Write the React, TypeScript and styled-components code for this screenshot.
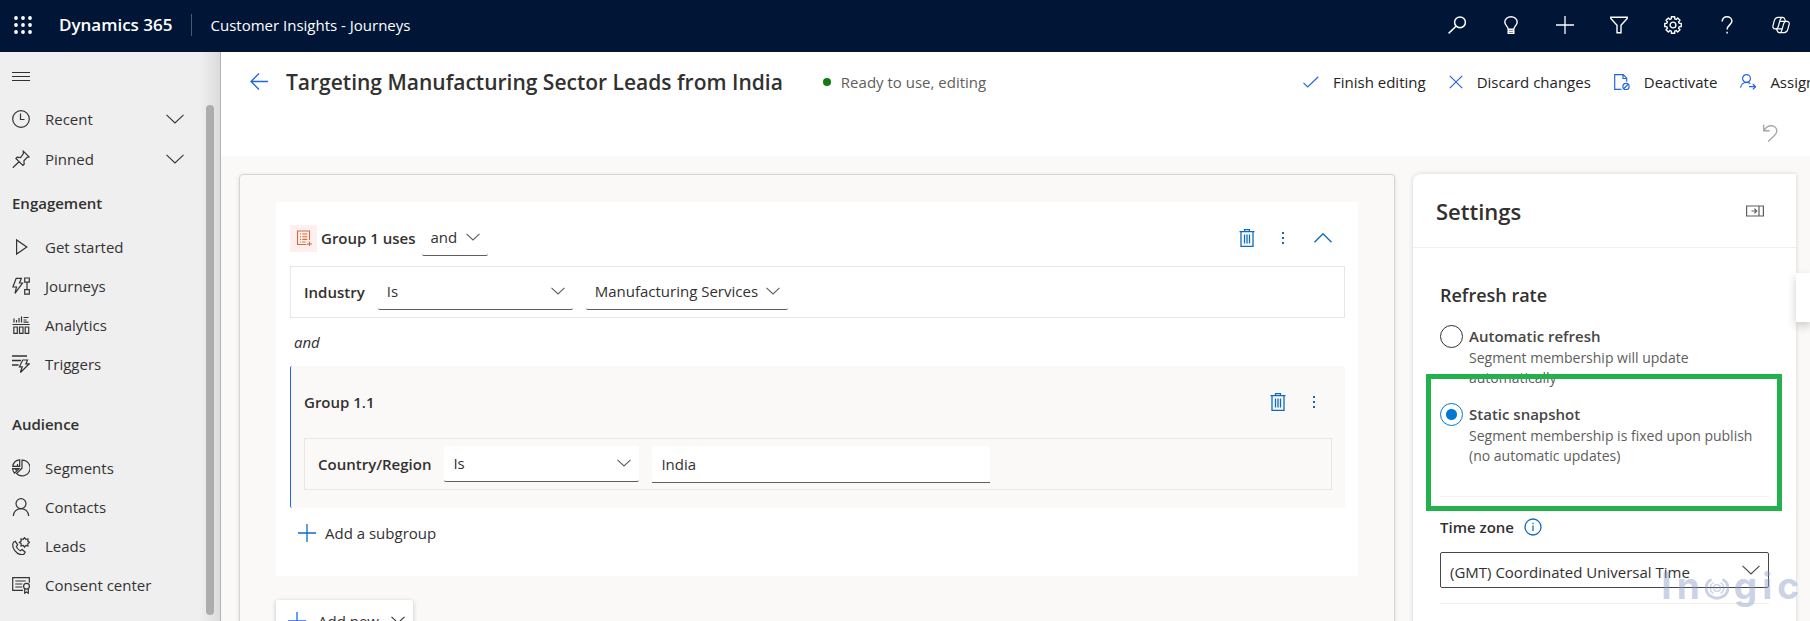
import React from "react";
import styled, { createGlobalStyle } from "styled-components";

const GlobalStyle = createGlobalStyle`
  *, *::before, *::after { box-sizing: border-box; }
  body { margin: 0; background: #ffffff; }
  body, button, input, select {
    font-family: "Open Sans", "Noto Sans", "Liberation Sans", sans-serif;
    font-size: 15px;
    color: #323130;
  }
  h1, h2, h3, p, ul { margin: 0; padding: 0; }
  ul { list-style: none; }
`;

/* ---------- icons ---------- */

type GlyphProps = { size?: number; w?: number; stroke?: number; children: React.ReactNode };

const Svg = styled.svg`
  display: block;
  flex: none;
  fill: none;
  stroke: currentColor;
`;

const Glyph = ({ size = 18, w, stroke = 1.2, children }: GlyphProps) => (
  <Svg
    width={w ?? size}
    height={size}
    viewBox={`0 0 ${w ?? size} ${size}`}
    strokeWidth={stroke}
    aria-hidden="true"
  >
    {children}
  </Svg>
);

const Waffle = () => (
  <Glyph>
    {[2, 9, 16].map((y) =>
      [2, 9, 16].map((x) => (
        <circle key={`${x}-${y}`} cx={x} cy={y} r="1.9" fill="currentColor" stroke="none" />
      ))
    )}
  </Glyph>
);
const SearchIcon = () => (
  <Glyph stroke={1.5}>
    <circle cx="12" cy="6.3" r="5.4" />
    <path d="M8 10.2 0.6 17.4" />
  </Glyph>
);
const BulbIcon = () => (
  <Glyph stroke={1.4}>
    <path d="M6.2 13.2c0-2.6-3.4-3.700-3.400-7.200a6.200 5.300 0 0 1 12.400 0c0 3.500-3.400 4.600-3.400 7.200zM6.200 13.200v4.100h5.600v-4.100M6.200 15.200h5.600" />
  </Glyph>
);
const PlusIcon = ({ size = 18 }: { size?: number }) => (
  <Glyph size={size} stroke={1.3}>
    <path d={`M${size / 2} 0v${size}M0 ${size / 2}h${size}`} />
  </Glyph>
);
const FilterIcon = () => (
  <Glyph stroke={1.4}>
    <path d="M0.800 1.200h16.400v1.200L11 9.200v7.600H7V9.200L0.800 2.400z" />
  </Glyph>
);
const gearPath = (() => {
  const pts: string[] = [];
  for (let i = 0; i < 8; i++) {
    const a = (i * Math.PI) / 4;
    [
      [-0.27, 6.4],
      [-0.2, 8.4],
      [0.2, 8.4],
      [0.27, 6.4],
    ].forEach(([d, r]) => {
      pts.push(`${(9 + Math.cos(a + d) * r).toFixed(2)} ${(9 + Math.sin(a + d) * r).toFixed(2)}`);
    });
  }
  return `M${pts.join("L")}Z`;
})();
const GearIcon = () => (
  <Glyph stroke={1.4}>
    <path d={gearPath} strokeLinejoin="round" />
    <circle cx="9" cy="9" r="2.9" />
  </Glyph>
);
const HelpIcon = () => (
  <Glyph stroke={1.5}>
    <path d="M4.200 5.400C4.200 2.500 6.300 0.800 9 0.800s4.900 1.700 4.900 4.300c0 3.500-4.800 4.200-4.800 8.400" />
    <path d="M9.100 15.800v1.800" />
  </Glyph>
);
const CopilotIcon = () => (
  <Glyph stroke={1.2}>
    <path d="M6.200 1.300h4.700c1.300 0 1.700 1 2.100 2.300l.5 1.700h1.400c1.900 0 2.700 1.500 2.200 3.200l-1.300 4.900c-.6 2.200-1.700 3.300-3.600 3.300H7.400c-1.400 0-1.900-.9-2.300-2.200l-.5-1.700H3.200c-1.900 0-2.700-1.500-2.200-3.200l1.300-4.900C2.900 2.400 4.200 1.300 6.200 1.300z" />
    <path d="M10.900 1.300c-1.500 0-2.300.8-2.700 2.300L6.300 10.500c-.4 1.500-1 2.300-2.400 2.300M7.400 16.700c1.500 0 2-.8 2.400-2.300l1.900-6.800c.4-1.500.9-2.300 2.300-2.300M7.700 5.300h6M4.300 12.800h5.900" />
  </Glyph>
);

const MenuIcon = () => (
  <Glyph>
    <path d="M0 4.500h18M0 8.500h18M0 12.500h18" />
  </Glyph>
);
const ClockIcon = () => (
  <Glyph>
    <circle cx="9" cy="9" r="8.3" />
    <path d="M8.500 3.500v6h4" />
  </Glyph>
);
const PinIcon = () => (
  <Glyph>
    <path d="M11.300 1.200 17 6.900l-1.800.4-3.300 3.500.3 3.400-1.300 1.300-7-7 1.300-1.300 3.400.3 2.800-3.900zM7.300 11.500.8 17.800" />
  </Glyph>
);
const PlayIcon = () => (
  <Glyph>
    <path d="M4.600 2v14L14.800 9z" />
  </Glyph>
);
const JourneyIcon = () => (
  <Glyph>
    <path d="M4.200 1.300h5.200L7.500 6h3L3 16.300 4.500 10H.9z" />
    <path d="M12.700 1h4.600v4.200h-4.600zM12.700 12.600h4.600v4.600h-4.600zM15 5.200v7.400" />
  </Glyph>
);
const AnalyticsIcon = () => (
  <Glyph>
    <path d="M2 2.500V6.500M4.500 4v2.500M7 2v4.500M9.500.5v6M11.500 1.500h5M11.500 4h3M11.500 6.200h5M.5 8.500h17.300M1.800 11h3.500v6.300H1.800zM7.500 11H11v6.300H7.500zM13.200 11h3.500v6.300h-3.500z" />
  </Glyph>
);
const TriggerIcon = () => (
  <Glyph>
    <path d="M0 1h15M0 5.500h9M0 10h6.500" strokeWidth="1.5" />
    <path d="M10.700 5h4.800l-1.600 3.800h3.400L8.400 17.500l1.800-5.700H7.400z" />
  </Glyph>
);
const SegmentIcon = () => (
  <Glyph>
    <path d="M10 1.100a7.900 7.900 0 1 1-5.400 13.500L10 9.200z" />
    <path d="M7.700.8v6.600H.8A7 7 0 0 1 7.700.8zM.6 9.700h6.500l-4.500 4.500C1.300 13 .7 11.500.6 9.700zM5.500 5v2M3 10l2 1.500" />
  </Glyph>
);
const PersonIcon = () => (
  <Glyph>
    <circle cx="9" cy="5.6" r="5" />
    <path d="M1.300 18c.2-4.300 3.400-7.400 7.700-7.400s7.500 3.100 7.700 7.400" />
  </Glyph>
);
const LeadIcon = () => (
  <Glyph>
    <path d="M1.500 5.200 3.300 4.300l2.400 3.500-1.400 1.800c.8 2 2.100 3.300 4 4.100l1.800-1.200 3.100 2.700-1.300 2c-3.500 1.200-6.700-.5-8.900-3.300C.9 11.200 0 8 1.500 5.200z" />
    <path d="m12.500.6 1.300 1.800 2.200-.5-.2 2.200 1.800 1.300-1.800 1.300.2 2.200-2.200-.5-1.300 1.800-1.300-1.800-2.200.5.2-2.200-1.800-1.300 1.800-1.300L9 1.900l2.200.5z" />
  </Glyph>
);
const ConsentIcon = () => (
  <Glyph>
    <path d="M11 14.300H.7V1.700h16.600v5M3.300 5h10.400M3.300 8h7M3.300 11h7" />
    <circle cx="14.5" cy="10.2" r="2.9" />
    <path d="M12.700 12.500v4.700l1.800-1.200 1.800 1.200v-4.700" />
  </Glyph>
);

const BackIcon = () => (
  <Glyph stroke={1.3}>
    <path d="M18 8.500H1M9 .5 1 8.500l8 8" />
  </Glyph>
);
const CheckIcon = () => (
  <Glyph size={16} stroke={1.2}>
    <path d="m.5 8.800 4.200 4.200L15.300 2.800" />
  </Glyph>
);
const CrossIcon = () => (
  <Glyph size={14} stroke={1.2}>
    <path d="m.8.800 12.400 12.400M13.200.800.800 13.200" />
  </Glyph>
);
const DeactivateIcon = () => (
  <Glyph size={16}>
    <path d="M7.500 15.400H.7V.6h8.600l3.400 3.600v3.600M9 .8v3.700h3.500" />
    <circle cx="12" cy="12.4" r="3.1" />
    <path d="m9.900 14.500 4.200-4.200" />
  </Glyph>
);
const AssignIcon = () => (
  <Glyph size={16}>
    <circle cx="6.5" cy="4.5" r="3.9" />
    <path d="M.6 13.700C.9 10.600 3.400 8.400 6.500 8.400c1.500 0 2.800.5 3.800 1.300M9 12.700h6.500M12.800 10l2.800 2.700-2.800 2.700" />
  </Glyph>
);
const UndoIcon = () => (
  <Glyph w={16} stroke={1.4}>
    <path d="M1.700.8v6h6M1.900 6.600C3.800 3.500 6 1.800 9.200 1.800c3.300 0 5.600 2.200 5.600 5.200 0 1.900-.9 3.100-2.100 4.300L6.200 17.500" />
  </Glyph>
);
const ListIcon = () => (
  <Glyph size={16} stroke={1.1}>
    <path d="M10.500 14.500H1.500V1h12v9M4 4h1M6.300 4h5M4 6.700h1M6.300 6.700h5M4 9.400h1M6.300 9.400h5M4 12h1M6.300 12h3.200M13.500 11.500v5M11 14h5" />
  </Glyph>
);
const TrashIcon = () => (
  <Glyph w={16} stroke={1.3}>
    <path d="M.5 2.700h15M5.500 2.500V.7h5v1.800M2 2.700v14.600h12V2.700" />
    <path d="M5.500 5.500v9M8 5.500v9M10.500 5.500v9" />
  </Glyph>
);
const MoreIcon = () => (
  <Glyph size={14} w={4}>
    {[1, 6, 11].map((y) => (
      <rect key={y} x="1" y={y} width="2" height="2" fill="currentColor" stroke="none" />
    ))}
  </Glyph>
);
const ChevronUp = () => (
  <Glyph size={10} w={18} stroke={1.4}>
    <path d="m.5 9.300 8.500-8.500 8.500 8.500" />
  </Glyph>
);
const ChevronDown = ({ w = 18 }: { w?: number }) => (
  <Glyph size={10} w={w} stroke={1.1}>
    <path d={`M.5 .8 ${w / 2} ${w / 2} ${w - 0.5} .8`} />
  </Glyph>
);
const DockIcon = () => (
  <Glyph size={12} w={18} stroke={1.2}>
    <path d="M.6 1h16.800v10H.6zM13 1v10M5.500 6h5M8.400 3.700 10.700 6 8.400 8.300" />
  </Glyph>
);
const InfoIcon = () => (
  <Glyph stroke={1.3}>
    <circle cx="9" cy="9" r="8" />
    <path d="M9 7.500v5.500M9 4.800v1.400" />
  </Glyph>
);

/* ---------- shell ---------- */

const Shell = styled.div`
  display: flex;
  flex-direction: column;
  height: 100vh;
  overflow: hidden;
`;

const TopBar = styled.header`
  display: flex;
  flex: none;
  align-items: center;
  height: 52px;
  padding: 0 20px 2px 14px;
  background: #011637;
  color: #ffffff;
`;

const IconButton = styled.button<{ $w?: number; $color?: string }>`
  display: flex;
  flex: none;
  align-items: center;
  justify-content: center;
  width: ${(p) => p.$w ?? 18}px;
  height: 32px;
  padding: 0;
  border: 0;
  background: transparent;
  color: ${(p) => p.$color ?? "inherit"};
`;

const Brand = styled.a`
  margin-left: 27px;
  padding-right: 19px;
  border-right: 1px solid #4a5870;
  color: #ffffff;
  font-size: 17px;
  font-weight: 600;
  line-height: 22px;
  text-decoration: none;
`;

const AppName = styled.span`
  margin-left: 18px;
`;

const TopActions = styled.div`
  display: flex;
  gap: 36px;
  margin-left: auto;
`;

const Columns = styled.div`
  display: flex;
  flex: 1;
  min-height: 0;
`;

/* ---------- site map ---------- */

const Sidebar = styled.nav`
  display: flex;
  flex: none;
  flex-direction: column;
  width: 221px;
  border-right: 1px solid #b3b3b3;
  background: linear-gradient(to right, #efefef 200px, #dcdcdc 220px);
`;

const MenuRow = styled.div`
  display: flex;
  align-items: center;
  height: 47px;
  padding: 2px 12px 0;
`;

const SidebarScroll = styled.div`
  display: flex;
  flex: 1;
  justify-content: space-between;
  min-height: 0;
  padding: 0 6px 6px 0;
`;

const SiteMap = styled.div`
  flex: 1;
  padding-left: 12px;
`;

const ScrollThumb = styled.div`
  width: 8px;
  margin-top: 6px;
  border-radius: 4px;
  background: #adadad;
`;

const NavSection = styled.section`
  & + & { margin-top: 17px; }
`;

const NavHeading = styled.h3`
  font-size: 15px;
  font-weight: 600;
  line-height: 48px;
`;

const NavLink = styled.a<{ $h?: number }>`
  display: flex;
  align-items: center;
  gap: 15px;
  height: ${(p) => p.$h ?? 39}px;
  padding-right: 22px;
  color: #333333;
  text-decoration: none;
`;

const NavText = styled.span`
  flex: 1;
`;

/* ---------- record header ---------- */

const Main = styled.main`
  display: flex;
  flex: 1;
  flex-direction: column;
  min-width: 0;
`;

const TitleRow = styled.div`
  display: flex;
  flex: none;
  align-items: center;
  height: 60px;
  padding-left: 29px;
`;

const Title = styled.h1`
  margin-left: 18px;
  font-size: 21px;
  font-weight: 600;
  line-height: 32px;
  white-space: nowrap;
`;

const Status = styled.span`
  display: flex;
  align-items: center;
  gap: 10px;
  margin: 0 20px 0 40px;
  color: #605e5c;
  white-space: nowrap;

  &::before {
    content: "";
    width: 8px;
    height: 8px;
    border-radius: 50%;
    background: #107c10;
  }
`;

const Commands = styled.div`
  display: flex;
  flex: 0 1 507px;
  gap: 23px;
  margin-left: auto;
  overflow: hidden;
`;

const Command = styled.button`
  display: flex;
  flex: none;
  align-items: center;
  gap: 14px;
  height: 32px;
  padding: 0;
  border: 0;
  background: transparent;
  color: #242424;

  svg { color: #2266e3; }
`;

const ToolRow = styled.div`
  display: flex;
  flex: none;
  align-items: center;
  justify-content: flex-end;
  height: 44px;
  padding: 0 32px 2px 0;
`;

/* ---------- segment builder ---------- */

const Workspace = styled.div`
  display: grid;
  flex: 1;
  grid-template-columns: minmax(0, 1fr) 401px 14px;
  min-height: 0;
  padding: 18px 0 0 18px;
  background: #faf9f8;
`;

const Builder = styled.section`
  height: 600px;
  padding: 27px 36px;
  border: 1px solid #d6d5d4;
  border-radius: 4px;
  box-shadow: 0 1px 4px rgba(0, 0, 0, 0.12);
`;

const Group = styled.div`
  padding: 0 13px 16px 14px;
  border-radius: 2px;
  background: #ffffff;
`;

const GroupHeader = styled.div`
  display: flex;
  align-items: center;
  height: 64px;
  padding-top: 8px;
`;

const GroupBadge = styled.span`
  display: flex;
  align-items: center;
  justify-content: center;
  width: 27px;
  height: 27px;
  margin-right: 4px;
  background: #fdf0ee;
  color: #d9683c;
`;

const Strong = styled.span`
  font-weight: 600;
  white-space: nowrap;
`;

const Actions = styled.div`
  display: flex;
  margin-left: auto;
`;

const Picker = styled.span<{ $w: number; $fill?: boolean }>`
  display: grid;
  flex: none;
  align-items: center;
  width: ${(p) => p.$w}px;
  height: 36px;
  border-bottom: 1px solid #605e5c;
  border-radius: 2px;
  background: ${(p) => (p.$fill ? "#ffffff" : "transparent")};
  color: #605e5c;

  & > * { grid-area: 1 / 1; }
  svg { justify-self: end; margin-right: 8px; pointer-events: none; }
`;

const Select = styled.select`
  width: 100%;
  height: 100%;
  padding: 0 0 2px 9px;
  border: 0;
  outline: 0;
  appearance: none;
  background: transparent;
`;

const ZoneSelect = styled(Select)`
  padding-top: 6px;
`;

const PickerGap = styled.span`
  display: flex;
  margin-left: 6px;
`;

const Condition = styled.div`
  display: flex;
  align-items: center;
  gap: 13px;
  height: 52px;
  padding-left: 13px;
  border: 1px solid #e8e7e6;
`;

const Joiner = styled.p`
  padding-left: 4px;
  font-style: italic;
  line-height: 48px;
`;

const Subgroup = styled.div`
  padding: 0 13px 18px;
  border-left: 1px solid #2266e3;
  border-radius: 2px;
  background: #faf9f8;
`;

const SubgroupHeader = styled.div`
  display: flex;
  align-items: center;
  height: 72px;
`;

const ValueInput = styled.input`
  width: 338px;
  height: 37px;
  padding: 0 9px;
  border: 0;
  border-bottom: 1px solid #605e5c;
  border-radius: 2px 2px 0 0;
  outline: 0;
  background: #ffffff;
`;

const AddSubgroup = styled.button`
  display: flex;
  align-items: center;
  gap: 9px;
  height: 52px;
  padding: 0 8px 2px;
  border: 0;
  background: transparent;

  svg { color: #0f6cbd; }
`;

const AddNew = styled.button`
  display: flex;
  align-items: center;
  gap: 12px;
  height: 42px;
  margin-top: 24px;
  padding: 0 8px 0 12px;
  border: 0;
  border-radius: 2px;
  background: #ffffff;
  box-shadow: 0 1px 4px rgba(0, 0, 0, 0.22);
  white-space: nowrap;

  svg:first-child { color: #2266e3; }
`;

/* ---------- settings ---------- */

const Panel = styled.aside`
  margin-left: 18px;
  border-radius: 8px 0 0 0;
  background: #ffffff;
  box-shadow: 0 0 4px rgba(0, 0, 0, 0.16);
`;

const PanelHeader = styled.div`
  display: flex;
  align-items: center;
  justify-content: space-between;
  height: 74px;
  padding: 0 32px 0 23px;
  border-bottom: 1px solid #f0efee;
`;

const PanelTitle = styled.h2`
  font-size: 22px;
  font-weight: 600;
  line-height: 32px;
`;

const PanelBody = styled.div`
  padding: 32px 27px 0;
`;

const SectionTitle = styled.h3`
  font-size: 18px;
  font-weight: 600;
  line-height: 30px;
`;

const Option = styled.label<{ $marked?: boolean }>`
  position: relative;
  display: grid;
  grid-template-columns: 23px 1fr;
  column-gap: 6px;
  margin-top: 15px;
  color: #605e5c;

  ${(p) =>
    p.$marked &&
    `&::after {
      content: "";
      position: absolute;
      inset: -29px -13px -45px -14px;
      border: 5px solid #22b14c;
    }`}
`;

const Radio = styled.input`
  width: 23px;
  height: 23px;
  margin: 0;
  border: 1px solid #323130;
  border-radius: 50%;
  appearance: none;

  &:checked {
    border-color: #0078d4;
    background: radial-gradient(circle, #0078d4 5px, transparent 6px);
  }
`;

const OptionTitle = styled.span`
  color: #484644;
  font-weight: 600;
  line-height: 23px;
`;

const OptionHint = styled.span`
  grid-column: 2;
  font-size: 14px;
  line-height: 20px;
`;

const Rule = styled.hr<{ $top: number }>`
  height: 1px;
  margin: ${(p) => p.$top}px 0 0;
  border: 0;
  background: #f0efee;
`;

const FieldLabel = styled.div`
  display: flex;
  align-items: center;
  gap: 10px;
  margin: 18px 0 13px;
  font-weight: 600;
  line-height: 24px;

  svg { color: #0f6cbd; }
`;

const ZonePicker = styled.span`
  display: grid;
  align-items: center;
  height: 36px;
  border: 1px solid #484644;
  border-radius: 2px;
  color: #484644;

  & > * { grid-area: 1 / 1; }
  svg { justify-self: end; margin-right: 8px; pointer-events: none; }
`;

const SideTab = styled.div`
  height: 49px;
  margin-top: 99px;
  background: #ffffff;
  box-shadow: 0 4px 10px rgba(0, 0, 0, 0.2);
`;

const Watermark = styled.div`
  position: absolute;
  right: 11px;
  bottom: 11px;
  display: flex;
  align-items: center;
  gap: 5px;
  color: #8e9cca;
  font-family: Inter, "Open Sans", sans-serif;
  font-size: 37px;
  font-weight: 700;
  line-height: 48px;
  opacity: 0.45;
  pointer-events: none;

  svg { margin-top: 4px; }
`;

const WatermarkRing = () => (
  <Svg width="24" height="24" viewBox="0 0 24 24" strokeWidth="3" aria-hidden="true">
    <path d="M6.500 3.500a9.500 9.500 0 0 0 1 17.500q4.500 2.500 9 0a9.500 9.500 0 0 0 1-17.500" />
    <path d="M8.500 6.500a6.300 6.300 0 0 0 0 11M15.500 6.500a6.300 6.300 0 0 1 0 11" strokeWidth="1.4" />
    <circle cx="12" cy="12" r="3.4" strokeWidth="1.4" />
    <path d="M10.500 12h3" strokeWidth="1.4" />
  </Svg>
);

/* ---------- page ---------- */

const topActions: [string, React.ReactNode][] = [
  ["Search", <SearchIcon />],
  ["Assistant", <BulbIcon />],
  ["New", <PlusIcon />],
  ["Advanced find", <FilterIcon />],
  ["Settings menu", <GearIcon />],
  ["Help", <HelpIcon />],
  ["Copilot", <CopilotIcon />],
];

const sections: { title: string; items: [string, React.ReactNode][] }[] = [
  {
    title: "Engagement",
    items: [
      ["Get started", <PlayIcon />],
      ["Journeys", <JourneyIcon />],
      ["Analytics", <AnalyticsIcon />],
      ["Triggers", <TriggerIcon />],
    ],
  },
  {
    title: "Audience",
    items: [
      ["Segments", <SegmentIcon />],
      ["Contacts", <PersonIcon />],
      ["Leads", <LeadIcon />],
      ["Consent center", <ConsentIcon />],
    ],
  },
];

const commands: [string, React.ReactNode][] = [
  ["Finish editing", <CheckIcon />],
  ["Discard changes", <CrossIcon />],
  ["Deactivate", <DeactivateIcon />],
  ["Assign", <AssignIcon />],
];

type DropdownProps = { label: string; value: string; width: number; fill?: boolean };

const Dropdown = ({ label, value, width, fill }: DropdownProps) => (
  <Picker $w={width} $fill={fill}>
    <Select aria-label={label} defaultValue={value}>
      <option>{value}</option>
    </Select>
    <ChevronDown w={14} />
  </Picker>
);

export default function App() {
  return (
    <Shell>
      <GlobalStyle />
      <TopBar>
        <IconButton aria-label="App launcher">
          <Waffle />
        </IconButton>
        <Brand href="#">Dynamics 365</Brand>
        <AppName>Customer Insights - Journeys</AppName>
        <TopActions>
          {topActions.map(([label, icon]) => (
            <IconButton key={label} aria-label={label}>
              {icon}
            </IconButton>
          ))}
        </TopActions>
      </TopBar>

      <Columns>
        <Sidebar>
          <MenuRow>
            <IconButton aria-label="Toggle site map">
              <MenuIcon />
            </IconButton>
          </MenuRow>
          <SidebarScroll>
            <SiteMap>
              <NavLink href="#" $h={40}>
                <ClockIcon />
                <NavText>Recent</NavText>
                <ChevronDown />
              </NavLink>
              <NavLink href="#" $h={40}>
                <PinIcon />
                <NavText>Pinned</NavText>
                <ChevronDown />
              </NavLink>
              {sections.map((section) => (
                <NavSection key={section.title}>
                  <NavHeading>{section.title}</NavHeading>
                  {section.items.map(([label, icon]) => (
                    <NavLink key={label} href="#">
                      {icon}
                      <NavText>{label}</NavText>
                    </NavLink>
                  ))}
                </NavSection>
              ))}
            </SiteMap>
            <ScrollThumb />
          </SidebarScroll>
        </Sidebar>

        <Main>
          <TitleRow>
            <IconButton aria-label="Back" $color="#2266e3">
              <BackIcon />
            </IconButton>
            <Title>Targeting Manufacturing Sector Leads from India</Title>
            <Status>Ready to use, editing</Status>
            <Commands>
              {commands.map(([label, icon]) => (
                <Command key={label}>
                  {icon}
                  {label}
                </Command>
              ))}
            </Commands>
          </TitleRow>
          <ToolRow>
            <IconButton aria-label="Undo" $w={16} $color="#a6a6a6">
              <UndoIcon />
            </IconButton>
          </ToolRow>

          <Workspace>
            <Builder>
              <Group>
                <GroupHeader>
                  <GroupBadge>
                    <ListIcon />
                  </GroupBadge>
                  <Strong>Group 1 uses</Strong>
                  <PickerGap>
                    <Dropdown label="Group 1 operator" value="and" width={66} />
                  </PickerGap>
                  <Actions>
                    <IconButton aria-label="Delete group 1" $w={36} $color="#0f6cbd">
                      <TrashIcon />
                    </IconButton>
                    <IconButton aria-label="More for group 1" $w={36} $color="#0f6cbd">
                      <MoreIcon />
                    </IconButton>
                    <IconButton aria-label="Collapse group 1" $w={44} $color="#0f6cbd">
                      <ChevronUp />
                    </IconButton>
                  </Actions>
                </GroupHeader>
                <Condition>
                  <Strong>Industry</Strong>
                  <Dropdown label="Industry condition" value="Is" width={195} />
                  <Dropdown label="Industry value" value="Manufacturing Services" width={202} />
                </Condition>
                <Joiner>and</Joiner>
                <Subgroup>
                  <SubgroupHeader>
                    <Strong>Group 1.1</Strong>
                    <Actions>
                      <IconButton aria-label="Delete group 1.1" $w={36} $color="#0f6cbd">
                        <TrashIcon />
                      </IconButton>
                      <IconButton aria-label="More for group 1.1" $w={36} $color="#0f6cbd">
                        <MoreIcon />
                      </IconButton>
                    </Actions>
                  </SubgroupHeader>
                  <Condition>
                    <Strong>Country/Region</Strong>
                    <Dropdown label="Country condition" value="Is" width={195} fill />
                    <ValueInput aria-label="Country value" defaultValue="India" />
                  </Condition>
                </Subgroup>
                <AddSubgroup>
                  <PlusIcon />
                  Add a subgroup
                </AddSubgroup>
              </Group>
              <AddNew>
                <PlusIcon />
                Add new
                <ChevronDown w={14} />
              </AddNew>
            </Builder>

            <Panel>
              <PanelHeader>
                <PanelTitle>Settings</PanelTitle>
                <IconButton aria-label="Collapse settings" $color="#605e5c">
                  <DockIcon />
                </IconButton>
              </PanelHeader>
              <PanelBody>
                <SectionTitle>Refresh rate</SectionTitle>
                <Option>
                  <Radio type="radio" name="refresh" />
                  <OptionTitle>Automatic refresh</OptionTitle>
                  <OptionHint>Segment membership will update automatically</OptionHint>
                </Option>
                <Option $marked>
                  <Radio type="radio" name="refresh" defaultChecked />
                  <OptionTitle>Static snapshot</OptionTitle>
                  <OptionHint>Segment membership is fixed upon publish (no automatic updates)</OptionHint>
                </Option>
                <Rule $top={30} />
                <FieldLabel>
                  <label htmlFor="zone">Time zone</label>
                  <InfoIcon />
                </FieldLabel>
                <ZonePicker>
                  <ZoneSelect id="zone" defaultValue="utc">
                    <option value="utc">(GMT) Coordinated Universal Time</option>
                  </ZoneSelect>
                  <ChevronDown />
                </ZonePicker>
                <Rule $top={15} />
              </PanelBody>
            </Panel>
            <SideTab />
          </Workspace>
        </Main>
      </Columns>

      <Watermark>
        <span>I</span>
        <span>n</span>
        <WatermarkRing />
        <span>g</span>
        <span>i</span>
        <span>c</span>
      </Watermark>
    </Shell>
  );
}
